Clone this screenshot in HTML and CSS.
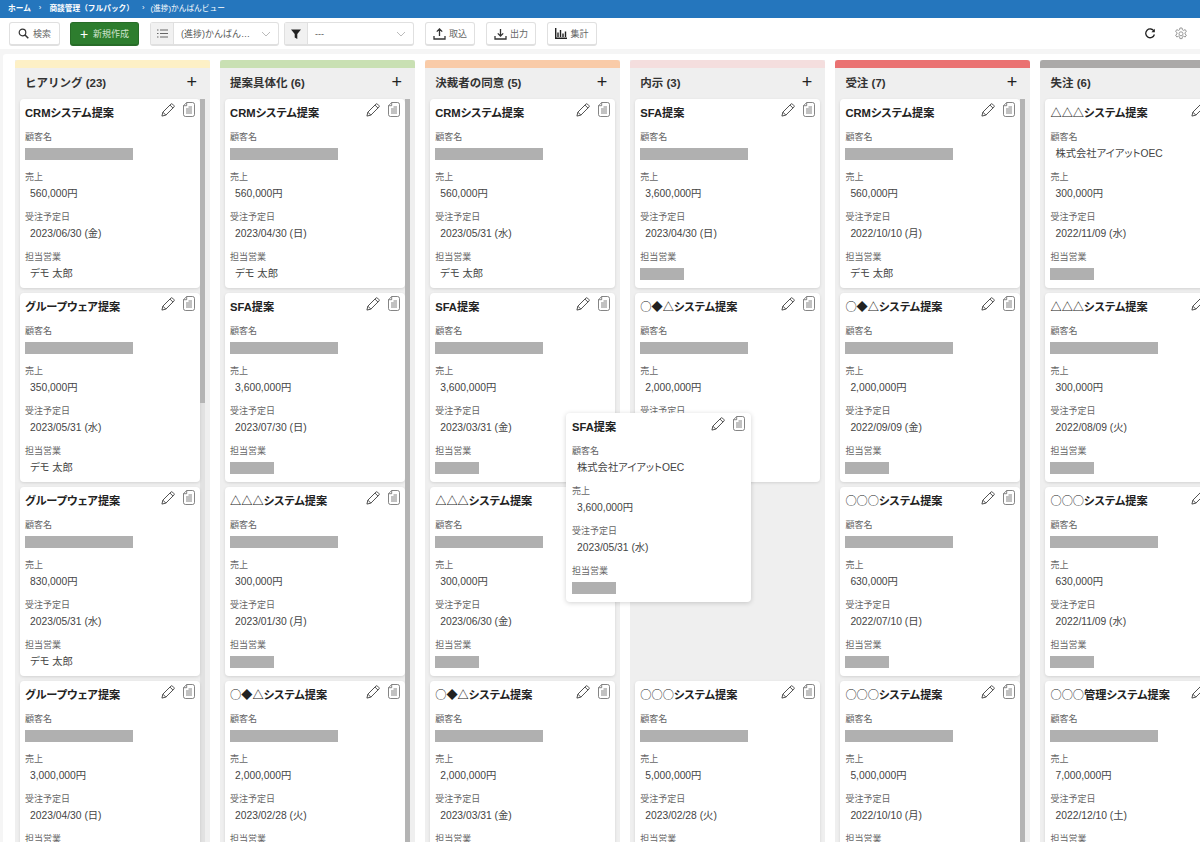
FILE: index.html
```html
<!DOCTYPE html>
<html lang="ja">
<head>
<meta charset="utf-8">
<title>(進捗)かんばんビュー</title>
<link rel="stylesheet" href="styles.css">
</head>
<body>
<svg class="defs" width="0" height="0">
  <symbol id="pen" viewBox="0 0 15 15"><path d="M1 14l1-4.200L10.600 1.200a1.200 1.200 0 0 1 1.700 0l1.500 1.500a1.200 1.200 0 0 1 0 1.700L5.200 13zM2 9.800L5.200 13M9.600 2.200l3.200 3.200" fill="none" stroke="#444" stroke-width="1"/></symbol>
  <symbol id="doc" viewBox="0 0 12 15"><path d="M3.700.5h5.800a2 2 0 0 1 2 2v10a2 2 0 0 1-2 2h-7a2 2 0 0 1-2-2V3.700zM3.700.5v3.200H.5M3 7h6M3 9h6M3 11h6M5.500 5H9" fill="none" stroke="#666" stroke-width=".8"/></symbol>
</svg>
<header class="crumbs"><b>ホーム</b><span class="sep">›</span><b>商談管理（フルパック）</b><span class="sep wide">›</span><span>(進捗)かんばんビュー</span></header>
<nav class="toolbar">
  <button class="btn btn-search"><svg width="11" height="11" viewBox="0 0 11 11"><circle cx="4.500" cy="4.500" r="3.300" fill="none" stroke="#333" stroke-width="1.200"/><path d="M7 7l3.300 3.300" stroke="#333" stroke-width="1.500"/></svg>検索</button>
  <button class="btn btn-new"><span class="plus">+</span>新規作成</button>
  <div class="select sel-view"><span class="addon"><svg width="11" height="9" viewBox="0 0 11 9"><path d="M0 1h1.500M3 1h8M0 4.500h1.500M3 4.500h8M0 8h1.500M3 8h8" stroke="#666" stroke-width="1"/></svg></span><span class="val">(進捗)かんばん…</span><svg class="chev" width="10" height="6" viewBox="0 0 10 6"><path d="M1 1l4 4 4-4" fill="none" stroke="#bbb"/></svg></div>
  <div class="select sel-filter"><span class="addon"><svg width="10" height="10" viewBox="0 0 10 10"><path d="M0 .5h10L6.300 5v5L3.700 8.500V5z" fill="#222"/></svg></span><span class="val">---</span><svg class="chev" width="10" height="6" viewBox="0 0 10 6"><path d="M1 1l4 4 4-4" fill="none" stroke="#bbb"/></svg></div>
  <button class="btn btn-tool"><svg width="13" height="12" viewBox="0 0 13 12"><path d="M6.500 8V1M3.800 3.600l2.700-2.700 2.700 2.700M1 8v3h11V8" fill="none" stroke="#333" stroke-width="1.300"/></svg>取込</button>
  <button class="btn btn-tool"><svg width="13" height="12" viewBox="0 0 13 12"><path d="M6.500 1v7M3.800 5.400l2.700 2.700 2.700-2.700M1 8v3h11V8" fill="none" stroke="#333" stroke-width="1.300"/></svg>出力</button>
  <button class="btn btn-tool"><svg width="12" height="11" viewBox="0 0 12 11"><path d="M.7 0v10.300H12M3 9V4.500M5.500 9V2M8 9V5.500M10.500 9V3.500" fill="none" stroke="#222" stroke-width="1.400"/></svg>集計</button>
  <div class="tool-right">
    <svg width="12" height="12" viewBox="0 0 12 12"><path d="M10 3.200A4.400 4.400 0 1 0 10.400 6.500" fill="none" stroke="#222" stroke-width="1.300"/><path d="M10.800 .8v3.400H7.400z" fill="#222"/></svg>
    <svg width="14" height="14" viewBox="0 0 14 14"><path d="M5.900 1h2.200l.3 1.800 1.200.6 1.600-.8 1.200 1.900-1.400 1.100v1.400l1.400 1.100-1.200 1.900-1.600-.8-1.200.6-.3 1.800H5.900l-.3-1.800-1.200-.6-1.600.8-1.200-1.900 1.400-1.100V5.600L1.600 4.500l1.200-1.900 1.600.8 1.200-.6z" fill="none" stroke="#999"/><circle cx="7" cy="6.800" r="2" fill="none" stroke="#999"/></svg>
  </div>
</nav>
<main class="board">

  <section class="col">
    <div class="col-bar c-yellow"></div>
    <h2 class="col-head"><span>ヒアリング (23)</span><i class="add">+</i></h2>
    <div class="col-body scroll short">
      <article class="card"><div class="card-top"><h3>CRMシステム提案</h3><svg class="ic"><use href="#pen"/></svg><svg class="ic2"><use href="#doc"/></svg></div><dl><dt>顧客名</dt><dd><i class="mask"></i></dd><dt>売上</dt><dd>560,000円</dd><dt>受注予定日</dt><dd>2023/06/30 (金)</dd><dt>担当営業</dt><dd>デモ 太郎</dd></dl></article>
      <article class="card"><div class="card-top"><h3>グループウェア提案</h3><svg class="ic"><use href="#pen"/></svg><svg class="ic2"><use href="#doc"/></svg></div><dl><dt>顧客名</dt><dd><i class="mask"></i></dd><dt>売上</dt><dd>350,000円</dd><dt>受注予定日</dt><dd>2023/05/31 (水)</dd><dt>担当営業</dt><dd>デモ 太郎</dd></dl></article>
      <article class="card"><div class="card-top"><h3>グループウェア提案</h3><svg class="ic"><use href="#pen"/></svg><svg class="ic2"><use href="#doc"/></svg></div><dl><dt>顧客名</dt><dd><i class="mask"></i></dd><dt>売上</dt><dd>830,000円</dd><dt>受注予定日</dt><dd>2023/05/31 (水)</dd><dt>担当営業</dt><dd>デモ 太郎</dd></dl></article>
      <article class="card"><div class="card-top"><h3>グループウェア提案</h3><svg class="ic"><use href="#pen"/></svg><svg class="ic2"><use href="#doc"/></svg></div><dl><dt>顧客名</dt><dd><i class="mask"></i></dd><dt>売上</dt><dd>3,000,000円</dd><dt>受注予定日</dt><dd>2023/04/30 (日)</dd><dt>担当営業</dt><dd>デモ 太郎</dd></dl></article>
    </div>
  </section>

  <section class="col">
    <div class="col-bar c-green"></div>
    <h2 class="col-head"><span>提案具体化 (6)</span><i class="add">+</i></h2>
    <div class="col-body scroll">
      <article class="card"><div class="card-top"><h3>CRMシステム提案</h3><svg class="ic"><use href="#pen"/></svg><svg class="ic2"><use href="#doc"/></svg></div><dl><dt>顧客名</dt><dd><i class="mask"></i></dd><dt>売上</dt><dd>560,000円</dd><dt>受注予定日</dt><dd>2023/04/30 (日)</dd><dt>担当営業</dt><dd>デモ 太郎</dd></dl></article>
      <article class="card"><div class="card-top"><h3>SFA提案</h3><svg class="ic"><use href="#pen"/></svg><svg class="ic2"><use href="#doc"/></svg></div><dl><dt>顧客名</dt><dd><i class="mask"></i></dd><dt>売上</dt><dd>3,600,000円</dd><dt>受注予定日</dt><dd>2023/07/30 (日)</dd><dt>担当営業</dt><dd><i class="mask sm"></i></dd></dl></article>
      <article class="card"><div class="card-top"><h3>△△△システム提案</h3><svg class="ic"><use href="#pen"/></svg><svg class="ic2"><use href="#doc"/></svg></div><dl><dt>顧客名</dt><dd><i class="mask"></i></dd><dt>売上</dt><dd>300,000円</dd><dt>受注予定日</dt><dd>2023/01/30 (月)</dd><dt>担当営業</dt><dd><i class="mask sm"></i></dd></dl></article>
      <article class="card"><div class="card-top"><h3><span class="sym">○</span>◆△システム提案</h3><svg class="ic"><use href="#pen"/></svg><svg class="ic2"><use href="#doc"/></svg></div><dl><dt>顧客名</dt><dd><i class="mask"></i></dd><dt>売上</dt><dd>2,000,000円</dd><dt>受注予定日</dt><dd>2023/02/28 (火)</dd><dt>担当営業</dt><dd><i class="mask sm"></i></dd></dl></article>
    </div>
  </section>

  <section class="col">
    <div class="col-bar c-orange"></div>
    <h2 class="col-head"><span>決裁者の同意 (5)</span><i class="add">+</i></h2>
    <div class="col-body">
      <article class="card"><div class="card-top"><h3>CRMシステム提案</h3><svg class="ic"><use href="#pen"/></svg><svg class="ic2"><use href="#doc"/></svg></div><dl><dt>顧客名</dt><dd><i class="mask"></i></dd><dt>売上</dt><dd>560,000円</dd><dt>受注予定日</dt><dd>2023/05/31 (水)</dd><dt>担当営業</dt><dd>デモ 太郎</dd></dl></article>
      <article class="card"><div class="card-top"><h3>SFA提案</h3><svg class="ic"><use href="#pen"/></svg><svg class="ic2"><use href="#doc"/></svg></div><dl><dt>顧客名</dt><dd><i class="mask"></i></dd><dt>売上</dt><dd>3,600,000円</dd><dt>受注予定日</dt><dd>2023/03/31 (金)</dd><dt>担当営業</dt><dd><i class="mask sm"></i></dd></dl></article>
      <article class="card"><div class="card-top"><h3>△△△システム提案</h3><svg class="ic"><use href="#pen"/></svg><svg class="ic2"><use href="#doc"/></svg></div><dl><dt>顧客名</dt><dd><i class="mask"></i></dd><dt>売上</dt><dd>300,000円</dd><dt>受注予定日</dt><dd>2023/06/30 (金)</dd><dt>担当営業</dt><dd><i class="mask sm"></i></dd></dl></article>
      <article class="card"><div class="card-top"><h3><span class="sym">○</span>◆△システム提案</h3><svg class="ic"><use href="#pen"/></svg><svg class="ic2"><use href="#doc"/></svg></div><dl><dt>顧客名</dt><dd><i class="mask"></i></dd><dt>売上</dt><dd>2,000,000円</dd><dt>受注予定日</dt><dd>2023/03/31 (金)</dd><dt>担当営業</dt><dd><i class="mask sm"></i></dd></dl></article>
    </div>
  </section>

  <section class="col">
    <div class="col-bar c-pink"></div>
    <h2 class="col-head"><span>内示 (3)</span><i class="add">+</i></h2>
    <div class="col-body">
      <article class="card"><div class="card-top"><h3>SFA提案</h3><svg class="ic"><use href="#pen"/></svg><svg class="ic2"><use href="#doc"/></svg></div><dl><dt>顧客名</dt><dd><i class="mask"></i></dd><dt>売上</dt><dd>3,600,000円</dd><dt>受注予定日</dt><dd>2023/04/30 (日)</dd><dt>担当営業</dt><dd><i class="mask sm"></i></dd></dl></article>
      <article class="card"><div class="card-top"><h3><span class="sym">○</span>◆△システム提案</h3><svg class="ic"><use href="#pen"/></svg><svg class="ic2"><use href="#doc"/></svg></div><dl><dt>顧客名</dt><dd><i class="mask"></i></dd><dt>売上</dt><dd>2,000,000円</dd><dt>受注予定日</dt><dd>2023/03/31 (金)</dd><dt>担当営業</dt><dd><i class="mask sm"></i></dd></dl></article>
      <div class="drop-slot"></div>
      <article class="card"><div class="card-top"><h3><span class="sym">○○○</span>システム提案</h3><svg class="ic"><use href="#pen"/></svg><svg class="ic2"><use href="#doc"/></svg></div><dl><dt>顧客名</dt><dd><i class="mask"></i></dd><dt>売上</dt><dd>5,000,000円</dd><dt>受注予定日</dt><dd>2023/02/28 (火)</dd><dt>担当営業</dt><dd><i class="mask sm"></i></dd></dl></article>
    </div>
  </section>

  <section class="col">
    <div class="col-bar c-red"></div>
    <h2 class="col-head"><span>受注 (7)</span><i class="add">+</i></h2>
    <div class="col-body scroll">
      <article class="card"><div class="card-top"><h3>CRMシステム提案</h3><svg class="ic"><use href="#pen"/></svg><svg class="ic2"><use href="#doc"/></svg></div><dl><dt>顧客名</dt><dd><i class="mask"></i></dd><dt>売上</dt><dd>560,000円</dd><dt>受注予定日</dt><dd>2022/10/10 (月)</dd><dt>担当営業</dt><dd>デモ 太郎</dd></dl></article>
      <article class="card"><div class="card-top"><h3><span class="sym">○</span>◆△システム提案</h3><svg class="ic"><use href="#pen"/></svg><svg class="ic2"><use href="#doc"/></svg></div><dl><dt>顧客名</dt><dd><i class="mask"></i></dd><dt>売上</dt><dd>2,000,000円</dd><dt>受注予定日</dt><dd>2022/09/09 (金)</dd><dt>担当営業</dt><dd><i class="mask sm"></i></dd></dl></article>
      <article class="card"><div class="card-top"><h3><span class="sym">○○○</span>システム提案</h3><svg class="ic"><use href="#pen"/></svg><svg class="ic2"><use href="#doc"/></svg></div><dl><dt>顧客名</dt><dd><i class="mask"></i></dd><dt>売上</dt><dd>630,000円</dd><dt>受注予定日</dt><dd>2022/07/10 (日)</dd><dt>担当営業</dt><dd><i class="mask sm"></i></dd></dl></article>
      <article class="card"><div class="card-top"><h3><span class="sym">○○○</span>システム提案</h3><svg class="ic"><use href="#pen"/></svg><svg class="ic2"><use href="#doc"/></svg></div><dl><dt>顧客名</dt><dd><i class="mask"></i></dd><dt>売上</dt><dd>5,000,000円</dd><dt>受注予定日</dt><dd>2022/10/10 (月)</dd><dt>担当営業</dt><dd><i class="mask sm"></i></dd></dl></article>
    </div>
  </section>

  <section class="col">
    <div class="col-bar c-gray"></div>
    <h2 class="col-head"><span>失注 (6)</span><i class="add">+</i></h2>
    <div class="col-body">
      <article class="card"><div class="card-top"><h3>△△△システム提案</h3><svg class="ic"><use href="#pen"/></svg><svg class="ic2"><use href="#doc"/></svg></div><dl><dt>顧客名</dt><dd>株式会社アイアットOEC</dd><dt>売上</dt><dd>300,000円</dd><dt>受注予定日</dt><dd>2022/11/09 (水)</dd><dt>担当営業</dt><dd><i class="mask sm"></i></dd></dl></article>
      <article class="card"><div class="card-top"><h3>△△△システム提案</h3><svg class="ic"><use href="#pen"/></svg><svg class="ic2"><use href="#doc"/></svg></div><dl><dt>顧客名</dt><dd><i class="mask"></i></dd><dt>売上</dt><dd>300,000円</dd><dt>受注予定日</dt><dd>2022/08/09 (火)</dd><dt>担当営業</dt><dd><i class="mask sm"></i></dd></dl></article>
      <article class="card"><div class="card-top"><h3><span class="sym">○○○</span>システム提案</h3><svg class="ic"><use href="#pen"/></svg><svg class="ic2"><use href="#doc"/></svg></div><dl><dt>顧客名</dt><dd><i class="mask"></i></dd><dt>売上</dt><dd>630,000円</dd><dt>受注予定日</dt><dd>2022/11/09 (水)</dd><dt>担当営業</dt><dd><i class="mask sm"></i></dd></dl></article>
      <article class="card"><div class="card-top"><h3><span class="sym">○○○</span>管理システム提案</h3><svg class="ic"><use href="#pen"/></svg><svg class="ic2"><use href="#doc"/></svg></div><dl><dt>顧客名</dt><dd><i class="mask"></i></dd><dt>売上</dt><dd>7,000,000円</dd><dt>受注予定日</dt><dd>2022/12/10 (土)</dd><dt>担当営業</dt><dd><i class="mask sm"></i></dd></dl></article>
    </div>
  </section>

  <article class="card card-drag"><div class="card-top"><h3>SFA提案</h3><svg class="ic"><use href="#pen"/></svg><svg class="ic2"><use href="#doc"/></svg></div><dl><dt>顧客名</dt><dd>株式会社アイアットOEC</dd><dt>売上</dt><dd>3,600,000円</dd><dt>受注予定日</dt><dd>2023/05/31 (水)</dd><dt>担当営業</dt><dd><i class="mask sm"></i></dd></dl></article>
</main>
</body>
</html>
```
FILE: styles.css
```css
* { box-sizing: border-box; }
html, body { margin: 0; height: 842px; overflow: hidden; }
body {
  background: #f5f5f5;
  color: #333;
  font-family: "Liberation Sans", "Noto Sans CJK JP", sans-serif;
  font-size: 9px;
  display: flex;
  flex-direction: column;
}
.defs { position: absolute; }

.crumbs {
  height: 18px;
  flex: none;
  background: #2576bd;
  color: #fff;
  font-size: 7.7px;
  display: flex;
  align-items: center;
  padding: 0 0 3px 8px;
}
.crumbs b { font-weight: 700; }
.sep { margin: 0 8px; }
.sep.wide { margin: 0 6px 0 8px; }

.toolbar {
  height: 31px;
  flex: none;
  background: #fff;
  display: flex;
  align-items: flex-start;
  padding: 4px 0 0 9px;
}
.btn {
  height: 24px;
  background: #fff;
  border: 1px solid #e0e0e0;
  border-bottom-width: 2px;
  border-radius: 3px;
  font: inherit;
  color: #666;
  display: flex;
  align-items: center;
  justify-content: center;
  gap: 3px;
  padding: 0;
}
.btn-search { width: 51px; margin-right: 10px; gap: 4px; }
.btn-new { width: 69px; margin-right: 11px; background: #2d7d2e; border-color: #276c28; color: #cfe3cd; gap: 5px; }
.plus { color: #fff; font-size: 14px; line-height: 1; }
.select {
  height: 24px;
  border: 1px solid #e0e0e0;
  border-bottom-width: 2px;
  border-radius: 3px;
  display: flex;
  align-items: center;
  margin-right: 5px;
  color: #555;
}
.sel-view { width: 129px; }
.sel-filter { width: 130px; margin-right: 11px; }
.addon {
  width: 23px;
  height: 100%;
  flex: none;
  background: #f1f1f1;
  border-right: 1px solid #e0e0e0;
  display: flex;
  align-items: center;
  justify-content: center;
}
.val { padding-left: 7px; flex: 1; }
.chev { margin-right: 7px; }
.btn-tool { width: 50px; margin-right: 11px; }
.tool-right {
  margin-left: auto;
  display: flex;
  align-items: center;
  gap: 18px;
  height: 24px;
  padding-right: 12px;
}

.board {
  flex: 1;
  min-height: 0;
  margin: 5px 0 0 3px;
  padding: 6px 0 0 12px;
  background: #fff;
  border-radius: 3px 0 0 0;
  display: flex;
  gap: 10.1px;
  overflow: hidden;
  position: relative;
}
.col { width: 195px; flex: none; background: #efefef; display: flex; flex-direction: column; }
.col-bar { height: 8px; flex: none; border-radius: 3px 3px 0 0; }
.c-yellow { background: #fdf0c6; }
.c-green { background: #c9e0b3; }
.c-orange { background: #f9cba8; }
.c-pink { background: #f4dede; }
.c-red { background: #ea7272; }
.c-gray { background: #aba9a8; }
.col-head {
  height: 27px;
  flex: none;
  margin: 0 0 4px;
  padding: 0 13px 0 10px;
  font-size: 11.5px;
  font-weight: 700;
  color: #333;
  display: flex;
  align-items: center;
  justify-content: space-between;
}
.add { font-style: normal; font-weight: 400; font-size: 18px; color: #222; line-height: 1; }
.col-body {
  flex: 1;
  min-height: 0;
  padding: 0 5px;
  display: flex;
  flex-direction: column;
  gap: 5px;
  position: relative;
}
.col-body.scroll { padding-right: 10px; }
.col-body.scroll::after {
  content: "";
  position: absolute;
  top: 0;
  bottom: 0;
  right: 5px;
  width: 5px;
  background: #b4b4b4;
}
.col-body.short::after { bottom: 439px; }
.col-body.short::before {
  content: "";
  position: absolute;
  top: 0;
  bottom: 0;
  right: 5px;
  width: 5px;
  background: #e2e2e2;
}
.card {
  flex: none;
  height: 189px;
  background: #fff;
  border-radius: 4px;
  box-shadow: 0 1px 3px rgba(0, 0, 0, .12);
  padding: 0 5px;
  position: relative;
}
.card-top { height: 25px; margin-bottom: 4px; display: flex; align-items: center; }
.card-top h3 {
  margin: 0;
  flex: 1;
  font-size: 11.2px;
  font-weight: 700;
  font-feature-settings: "palt";
  color: #222;
  white-space: nowrap;
}
.sym { font-family: "Noto Sans CJK JP", sans-serif; font-feature-settings: normal; font-weight: 400; }
.ic { width: 14px; height: 14px; margin: -3px 8px 0 0; flex: none; }
.ic2 { width: 12px; height: 15px; margin-top: -4px; flex: none; }
dl { margin: 0; }
dt { height: 18px; line-height: 18px; color: #666; font-size: 9px; }
dd {
  height: 22px;
  line-height: 16px;
  margin: 0 0 0 5px;
  color: #444;
  font-size: 10.3px;
  font-feature-settings: "palt";
  white-space: nowrap;
}
.mask { display: block; width: 108px; height: 12px; margin: 0 0 0 -5px; transform: translateY(2px); background: #b0b0b0; }
.mask.sm { width: 44px; }
.drop-slot { height: 189px; flex: none; }
.card-drag {
  position: absolute;
  left: 563px;
  top: 359px;
  width: 185px;
  box-shadow: 0 1px 5px rgba(0, 0, 0, .18);
  padding: 0 6px;
}
```
